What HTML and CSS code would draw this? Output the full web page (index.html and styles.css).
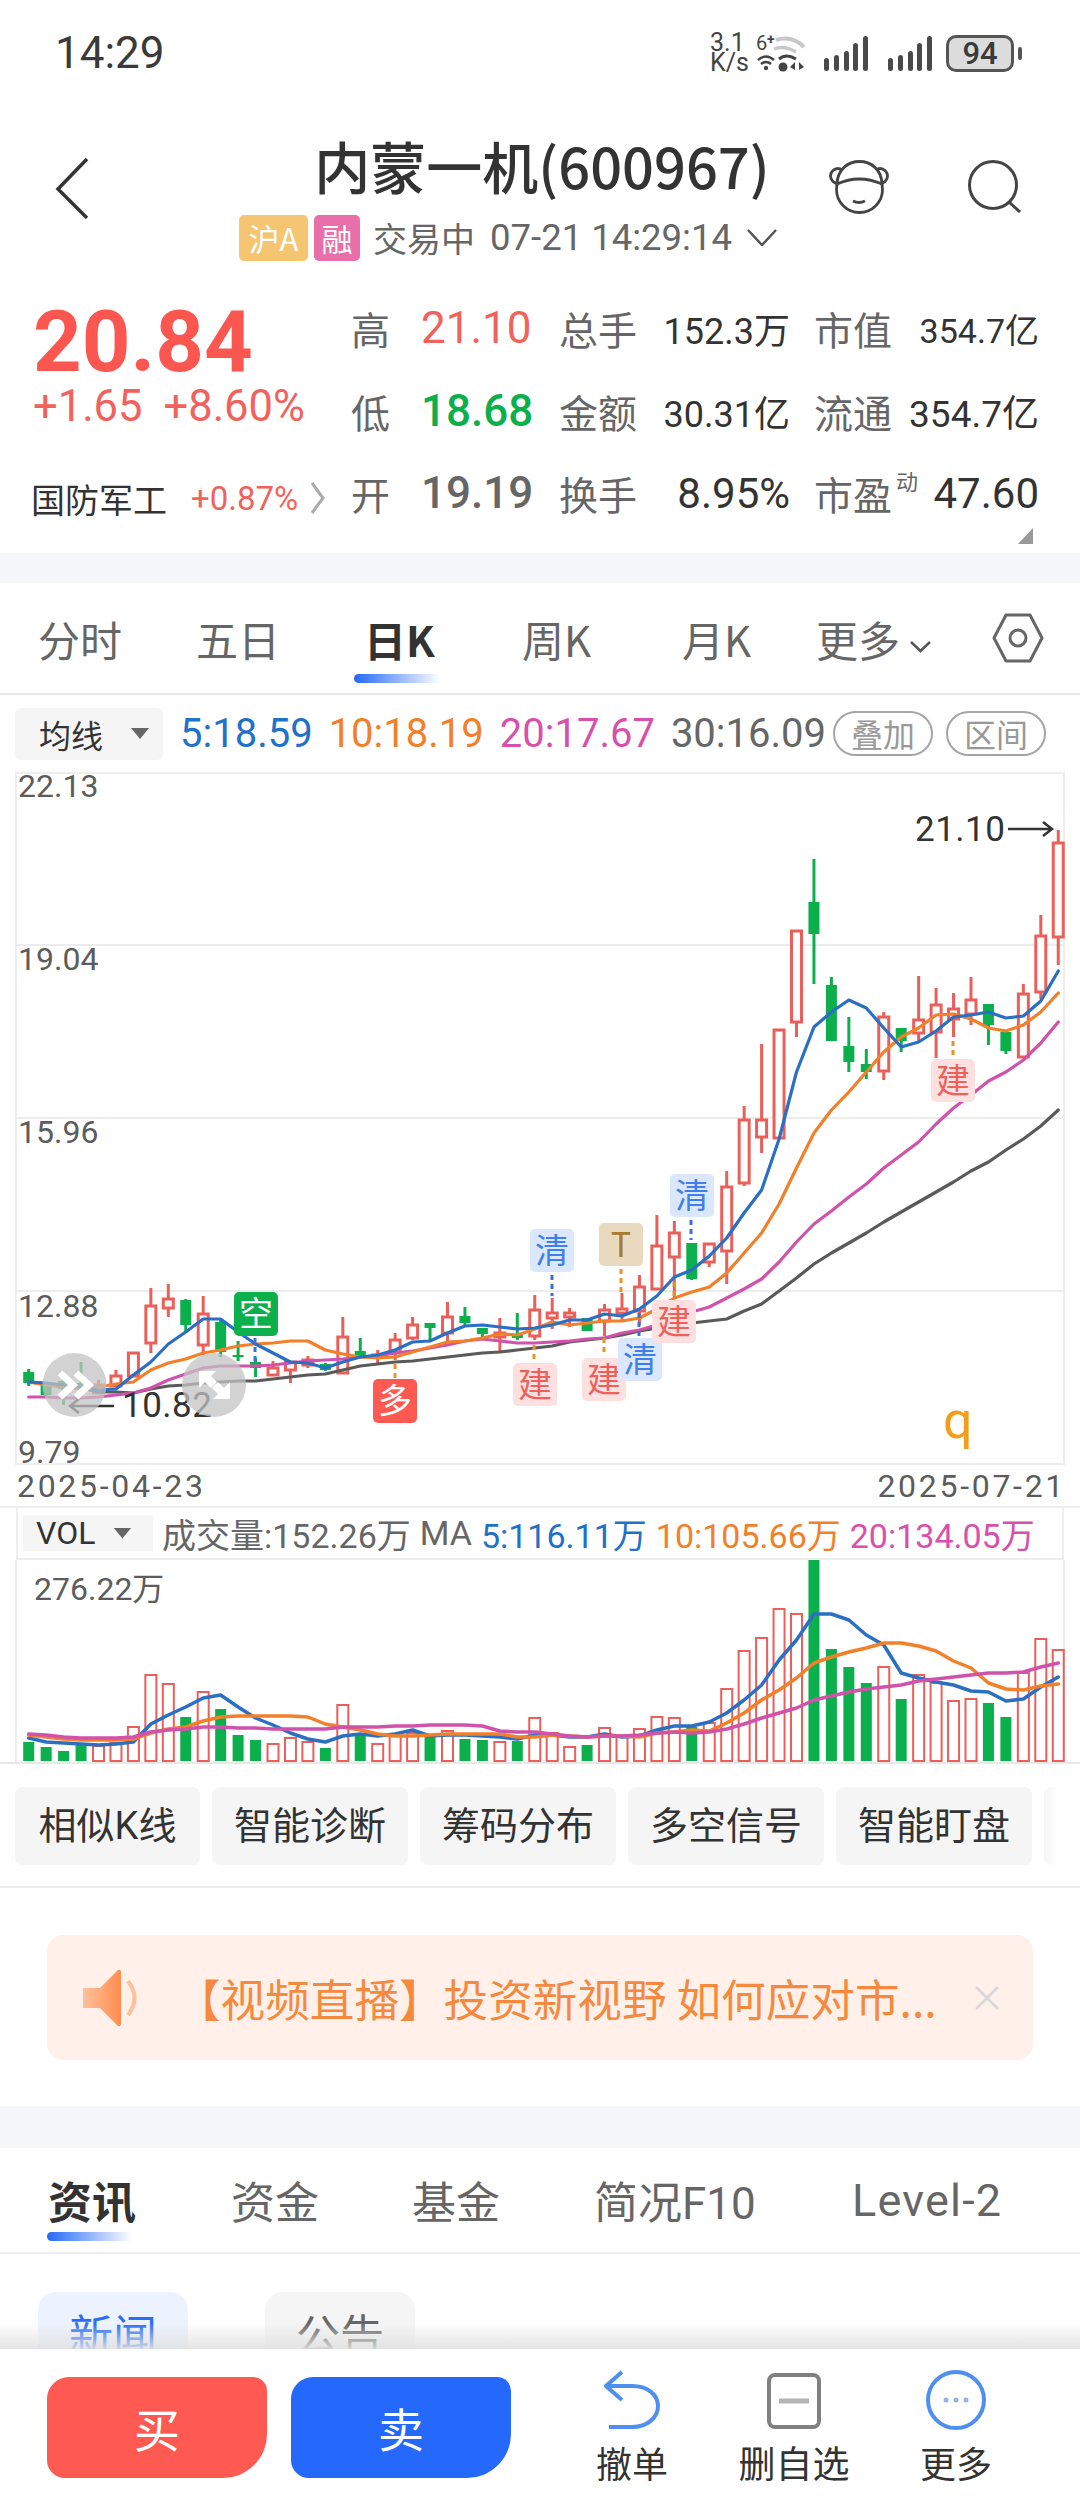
FILE: index.html
```html
<!DOCTYPE html>
<html lang="zh-CN">
<head>
    <meta charset="UTF-8">
    <meta name="viewport" content="width=device-width, initial-scale=1.0">
    <title>内蒙一机(600967)</title>
    <link rel="stylesheet" href="styles.css">
</head>
<body>
    <div class="status">
        <span class="status-time">14:29</span>
        <div class="status-icons">
            <div class="net-speed"><span>3.1</span><span>K/s</span></div>
            <svg class="wifi" width="50" height="37" viewBox="0 0 50 37">
                <text x="0" y="15" class="wifi-six">6</text>
                <text x="11" y="9" class="wifi-plus">+</text>
                <path d="M20 5Q36 0 48 12" fill="none" stroke="#c8c8c8" stroke-width="4"/>
                <path d="M18 14Q28 10 40 17" fill="none" stroke="#c8c8c8" stroke-width="3.5"/>
                <path d="M2 25Q10 18 18 25M5 29Q10 25 15 29" fill="none" stroke="#444" stroke-width="2.5"/>
                <circle cx="10" cy="33" r="2.2" fill="#444"/>
                <path d="M23 24Q30 18 40 24" fill="none" stroke="#444" stroke-width="3"/>
                <circle cx="27" cy="32" r="4.5" fill="#444"/>
                <path d="M34 32l5-5v8zM43 27l5 5-5 3z" fill="#444"/>
            </svg>
            <div class="signal"><i></i><i></i><i></i><i></i><i></i></div>
            <div class="signal signal-second"><i></i><i></i><i></i><i></i><i></i></div>
            <div class="battery">94</div>
            <div class="battery-tip"></div>
        </div>
    </div>

    <div class="header">
        <svg class="back-icon" width="36" height="64" viewBox="0 0 36 64">
            <path d="M33 3L4 33l29 29" fill="none" stroke="#333" stroke-width="3.5"/>
        </svg>
        <div class="header-title">
            <h1 class="stock-name">内蒙一机(600967)</h1>
            <div class="stock-sub">
                <span class="tag tag-market">沪A</span>
                <span class="tag tag-margin">融</span>
                <span class="trade-state">交易中</span>
                <span class="trade-time">07-21 14:29:14</span>
                <svg width="30" height="17" viewBox="0 0 30 17"><path d="M1 1l14 15L29 1" fill="none" stroke="#555" stroke-width="2.5"/></svg>
            </div>
        </div>
        <svg class="robot-icon" width="60" height="56" viewBox="0 0 60 56">
            <circle cx="9" cy="17" r="7.5" fill="none" stroke="#444" stroke-width="2.8"/>
            <circle cx="51" cy="17" r="7.5" fill="none" stroke="#444" stroke-width="2.8"/>
            <circle cx="30.500" cy="30.500" r="23" fill="#fff" stroke="#444" stroke-width="2.8"/>
            <path d="M8 25C9-5 52-5 53 25Q30 15 8 25Z" fill="#fff" stroke="#444" stroke-width="2.8" stroke-linejoin="round"/>
            <path d="M24 42Q30 45 36 42" fill="none" stroke="#444" stroke-width="2.8"/>
        </svg>
        <svg class="search-icon" width="56" height="54" viewBox="0 0 56 54">
            <circle cx="26" cy="25" r="23.5" fill="none" stroke="#444" stroke-width="3"/>
            <path d="M42 42l11 10" fill="none" stroke="#444" stroke-width="3"/>
        </svg>
    </div>

    <div class="quote">
        <div class="quote-left">
            <div class="price">20.84</div>
            <div class="price-change"><span>+1.65</span><span>+8.60%</span></div>
            <div class="sector">
                <span class="sector-name">国防军工</span>
                <span class="sector-change">+0.87%</span>
                <svg width="14" height="32" viewBox="0 0 14 32"><path d="M1 1l11 15L1 31" fill="none" stroke="#aaa" stroke-width="3"/></svg>
            </div>
        </div>
        <div class="quote-table">
            <span class="q-label">高</span><span class="q-big red">21.10</span>
            <span class="q-label">总手</span><span class="q-val q-mid">152.3万</span>
            <span class="q-label">市值</span><span class="q-end q-small">354.7亿</span>

            <span class="q-label">低</span><span class="q-big green">18.68</span>
            <span class="q-label">金额</span><span class="q-val q-mid">30.31亿</span>
            <span class="q-label">流通</span><span class="q-end q-mid2">354.7亿</span>

            <span class="q-label">开</span><span class="q-big gray">19.19</span>
            <span class="q-label">换手</span><span class="q-val q-large">8.95%</span>
            <span class="q-label">市盈<sup class="q-sup">动</sup></span><span class="q-end q-large">47.60</span>
        </div>
        <div class="corner-mark"></div>
    </div>

    <div class="band band-top"></div>

    <div class="period-tabs">
        <span class="tab">分时</span>
        <span class="tab">五日</span>
        <span class="tab tab-active">日K</span>
        <span class="tab">周K</span>
        <span class="tab">月K</span>
        <span class="tab tab-more">更多<svg width="21" height="12" viewBox="0 0 21 12"><path d="M1 1l9.500 9L20 1" fill="none" stroke="#555" stroke-width="2.5"/></svg></span>
        <svg width="52" height="50" viewBox="0 0 52 50">
            <path d="M14 2H38L50 25 38 48H14L2 25Z" fill="none" stroke="#666" stroke-width="3" stroke-linejoin="round"/>
            <circle cx="26" cy="25" r="8" fill="none" stroke="#666" stroke-width="3"/>
        </svg>
    </div>

    <div class="ma-row">
        <div class="picker picker-ma">均线<i class="picker-arrow"></i></div>
        <span class="ma5">5:18.59</span>
        <span class="ma10">10:18.19</span>
        <span class="ma20">20:17.67</span>
        <span class="ma30">30:16.09</span>
        <span class="pill pill-first">叠加</span>
        <span class="pill">区间</span>
    </div>

    <svg class="kline" width="1080" height="693" viewBox="0 772 1080 693">
        <rect class="frame" x="16" y="773" width="1048" height="691"/>
        <path class="grid" d="M16 945H1064M16 1118H1064M16 1291H1064"/>
        <text class="axis" x="18" y="797">22.13</text>
        <text class="axis" x="18" y="970">19.04</text>
        <text class="axis" x="18" y="1143">15.96</text>
        <text class="axis" x="18" y="1317">12.88</text>
        <text class="axis" x="18" y="1463">9.79</text>
        <g id="candles"></g>
        <g id="kLines"></g>
        <g id="signals"></g>
        <text class="mark" x="915" y="841">21.10</text>
        <path class="mark-arrow" d="M1008 829H1052M1043 822l9 7-9 7"/>
        <text class="mark" x="122" y="1417">10.82</text>
        <path class="mark-arrow" d="M114 1406H70M79 1399l-9 7 9 7"/>
        <text class="letter-q" x="943" y="1438">q</text>
        <circle class="float-btn" cx="74.500" cy="1385" r="32"/>
        <path class="float-icon" d="M60 1373l13 12-13 12M76 1373l13 12-13 12"/>
        <circle class="float-btn" cx="214" cy="1385" r="32"/>
        <path class="float-arrow" d="M199 1371h17l-5 5 6 6-6 6-6-6-6 6zM230 1399h-17l5-5-6-6 6-6 6 6 6-6z"/>
    </svg>

    <div class="date-row"><span>2025-04-23</span><span>2025-07-21</span></div>

    <div class="vol-row">
        <div class="picker picker-vol">VOL<i class="picker-arrow"></i></div>
        <span class="vol-text">成交量:152.26万</span>
        <span class="vol-text">MA</span>
        <span class="ma5">5:116.11万</span>
        <span class="ma10">10:105.66万</span>
        <span class="ma20">20:134.05万</span>
    </div>

    <svg class="volume" width="1080" height="202" viewBox="0 1560 1080 202">
        <path class="frame-side" d="M16 1560V1762M1064 1560V1762"/>
        <text class="axis" x="34" y="1600">276.22万</text>
        <g id="volBars"></g>
        <g id="volLines"></g>
    </svg>

    <div class="shortcuts">
        <span class="shortcut shortcut-first">相似K线</span>
        <span class="shortcut">智能诊断</span>
        <span class="shortcut">筹码分布</span>
        <span class="shortcut">多空信号</span>
        <span class="shortcut">智能盯盘</span>
        <span class="shortcut shortcut-cut"></span>
    </div>

    <div class="banner-wrap">
        <div class="banner">
            <svg class="speaker" width="58" height="58" viewBox="0 0 58 58">
                <defs>
                    <linearGradient id="speakerFill" x1="0" x2="1" y1="0" y2="0">
                        <stop offset="0" stop-color="#ffc09c"/>
                        <stop offset="1" stop-color="#ff8d4f"/>
                    </linearGradient>
                </defs>
                <path d="M0 19H17L35 1Q38 0 38 4V54Q38 58 35 57L17 39H0Z" fill="url(#speakerFill)"/>
                <path d="M45 12Q58 29 45 46" fill="none" stroke="#ffc09c" stroke-width="4"/>
            </svg>
            <span class="banner-text">【视频直播】投资新视野 如何应对市...</span>
            <svg width="24" height="24" viewBox="0 0 24 24"><path d="M1 1L23 23M23 1L1 23" stroke="#d8d8d8" stroke-width="2.5"/></svg>
        </div>
    </div>

    <div class="band band-mid"></div>

    <div class="info-tabs">
        <span class="info-tab info-active">资讯</span>
        <span class="info-tab">资金</span>
        <span class="info-tab">基金</span>
        <span class="info-tab">简况F10</span>
        <span class="info-tab info-level">Level-2</span>
    </div>

    <div class="news-types">
        <span class="news-type news-active">新闻</span>
        <span class="news-type">公告</span>
    </div>

    <div class="bottom-bar">
        <div class="trade-btn buy">买</div>
        <div class="trade-btn sell">卖</div>
        <div class="action action-first">
            <svg width="56" height="60" viewBox="0 0 56 60">
                <path d="M18 2L2 16l16 14M2 16H28C44 16 54 25 54 36S44 57 28 57H5" fill="none" stroke="#4f8ff0" stroke-width="4"/>
            </svg>
            <span>撤单</span>
        </div>
        <div class="action">
            <svg width="56" height="60" viewBox="0 0 56 60">
                <rect x="3" y="5" width="50" height="52" rx="6" fill="none" stroke="#808080" stroke-width="4"/>
                <path d="M13 31H43" stroke="#b5b5b5" stroke-width="5"/>
            </svg>
            <span class="action-wide">删自选</span>
        </div>
        <div class="action">
            <svg width="60" height="60" viewBox="0 0 60 60">
                <circle cx="30" cy="30" r="28" fill="none" stroke="#4f8ff0" stroke-width="4"/>
                <circle cx="20" cy="30" r="2.500" fill="#8fb5ea"/>
                <circle cx="30" cy="30" r="2.500" fill="#8fb5ea"/>
                <circle cx="40" cy="30" r="2.500" fill="#8fb5ea"/>
            </svg>
            <span>更多</span>
        </div>
    </div>

    <script src="chart.js"></script>
</body>
</html>
```
FILE: styles.css
```css
* { box-sizing: border-box; }
body {
    margin: 0;
    width: 1080px;
    height: 2504px;
    overflow: hidden;
    background: #fff;
    color: #333;
    font-family: Roboto, "Noto Sans CJK SC", sans-serif;
}

/* status bar */
.status {
    height: 106px;
    padding: 0 58px 0 55px;
    display: flex;
    align-items: center;
    justify-content: space-between;
}
.status-time { font-size: 44px; color: #3a3a3a; }
.status-icons { display: flex; align-items: center; }
.net-speed {
    display: flex;
    flex-direction: column;
    font-size: 25px;
    line-height: 20px;
    color: #444;
    width: 46px;
}
.wifi { margin-right: 18px; overflow: visible; }
.wifi-six { font-size: 20px; fill: #444; }
.wifi-plus { font-size: 14px; fill: #444; font-weight: 700; }
.signal {
    display: flex;
    align-items: flex-end;
    justify-content: space-between;
    width: 44px;
    height: 35px;
    margin-right: 20px;
}
.signal-second { margin-right: 14px; }
.signal i { width: 5px; background: #4a4a4a; border-radius: 2.5px; }
.signal i:nth-child(1) { height: 13px; }
.signal i:nth-child(2) { height: 16px; }
.signal i:nth-child(3) { height: 20px; }
.signal i:nth-child(4) { height: 28px; }
.signal i:nth-child(5) { height: 35px; }
.battery {
    width: 68px;
    height: 37px;
    border: 3px solid #555;
    border-radius: 10px;
    background: #dcdcdc;
    font-size: 31px;
    line-height: 31px;
    font-weight: 500;
    text-align: center;
    color: #3a3a3a;
}
.battery-tip {
    width: 4px;
    height: 13px;
    margin-left: 4px;
    background: #555;
    border-radius: 2px;
}

/* title */
.header {
    height: 181px;
    display: flex;
    align-items: flex-start;
}
.back-icon { margin: 50px 0 0 54px; }
.header-title {
    width: 740px;
    display: flex;
    flex-direction: column;
    align-items: center;
}
.stock-name {
    margin: 25px 0 0 164px;
    font-family: "Noto Sans CJK SC", sans-serif;
    font-size: 56px;
    line-height: 68px;
    font-weight: 500;
    color: #333;
    white-space: nowrap;
}
.stock-sub {
    margin: 14px 0 0 96px;
    display: flex;
    align-items: center;
    color: #666;
    font-size: 34px;
    white-space: nowrap;
}
.tag {
    height: 46px;
    border-radius: 5px;
    color: #fff;
    font-size: 31px;
    line-height: 46px;
    text-align: center;
    font-family: "Noto Sans CJK SC", sans-serif;
}
.tag-market { width: 69px; background: #f5c572; margin-right: 6px; }
.tag-margin { width: 46px; background: #e86fa9; margin-right: 13px; }
.trade-state { margin-right: 15px; font-family: "Noto Sans CJK SC", sans-serif; font-size: 34px; }
.trade-time { margin-right: 15px; font-size: 36.5px; }
.robot-icon { margin: 53px 0 0 -1px; }
.search-icon { margin: 54px 0 0 78px; }

/* price block */
.quote { position: relative; height: 266px; display: flex; }
.quote-left { width: 351px; padding: 14px 0 0 33px; }
.price {
    font-size: 85px;
    line-height: 82px;
    font-weight: 700;
    color: #fb5750;
}
.price-change {
    display: flex;
    gap: 21px;
    font-size: 43.5px;
    line-height: 48px;
    color: #f2625c;
}
.sector {
    margin-top: 43px;
    height: 48px;
    display: flex;
    align-items: center;
    margin-left: -2px;
}
.sector-name {
    width: 160px;
    font-family: "Noto Sans CJK SC", sans-serif;
    font-size: 34px;
    color: #333;
}
.sector-change { width: 120px; font-size: 33px; color: #f2625c; }
.quote-table {
    display: grid;
    grid-template-columns: 70px 138px 78px 177px 78px 147px;
    grid-auto-rows: 82.5px;
    align-items: center;
    height: 247px;
}
.q-label {
    font-family: "Noto Sans CJK SC", sans-serif;
    font-size: 39px;
    color: #666;
    white-space: nowrap;
    position: relative;
}
.q-sup {
    position: absolute;
    left: 82px;
    top: 0;
    font-size: 22px;
    line-height: 30px;
}
.q-big { font-size: 44px; }
.red { color: #f2625c; }
.green { color: #0bb04d; font-weight: 500; }
.gray { color: #666; font-weight: 500; }
.q-val { text-align: right; padding-right: 24px; color: #333; white-space: nowrap; }
.q-end { text-align: right; color: #333; white-space: nowrap; }
.q-small { font-size: 34px; }
.q-mid { font-size: 36px; }
.q-mid2 { font-size: 37px; }
.q-large { font-size: 42px; }
.corner-mark {
    position: absolute;
    left: 1018px;
    top: 241px;
    width: 15px;
    height: 16px;
    background: #999;
    clip-path: polygon(100% 0, 100% 100%, 0 100%);
}

.band { background: #f5f7f9; }
.band-top { height: 30px; }
.band-mid { height: 42px; }

/* period tabs */
.period-tabs {
    height: 112px;
    padding-left: 38px;
    display: grid;
    grid-template-columns: 158px 168px 158px 160px 134px 176px 52px;
    align-items: center;
    border-bottom: 2px solid #e8e8e8;
}
.tab {
    position: relative;
    font-size: 42px;
    color: #666;
    white-space: nowrap;
    font-family: "Noto Sans CJK SC", sans-serif;
    font-weight: 400;
}
.tab-more svg { margin-left: 10px; vertical-align: 4px; }
.tab-active { font-weight: 700; color: #333; }
.tab-active::after {
    content: "";
    position: absolute;
    left: -10px;
    top: 66px;
    width: 87px;
    height: 9px;
    border-radius: 5px 0 0 5px;
    background: linear-gradient(90deg, #2469fb, rgba(36, 105, 251, 0));
}

/* moving average row */
.ma-row {
    height: 77px;
    padding-left: 15px;
    display: flex;
    align-items: center;
    font-size: 40px;
    gap: 16px;
    white-space: nowrap;
}
.picker {
    display: flex;
    align-items: center;
    background: #f5f5f5;
    color: #333;
}
.picker-ma {
    width: 148px;
    height: 52px;
    padding-left: 24px;
    border-radius: 6px;
    font-family: "Noto Sans CJK SC", sans-serif;
    font-size: 32px;
    margin-right: 1px;
}
.picker-arrow {
    width: 18px;
    height: 11px;
    margin-left: 28px;
    background: #666;
    clip-path: polygon(0 0, 100% 0, 50% 100%);
}
.ma5 { color: #1f71c9; }
.ma10 { color: #f27f2a; }
.ma20 { color: #d850ab; }
.ma30 { color: #666; }
.pill {
    width: 100px;
    height: 45px;
    border: 2px solid #a5a5a5;
    border-radius: 23px;
    color: #999;
    font-family: "Noto Sans CJK SC", sans-serif;
    font-size: 32px;
    line-height: 40px;
    text-align: center;
    margin-left: -3px;
}
.pill-first { margin-left: -9px; }

/* charts */
.kline, .volume { display: block; overflow: visible; }
.frame { fill: none; stroke: #eeeeee; stroke-width: 2; }
.frame-side { stroke: #eeeeee; stroke-width: 2; }
.grid { stroke: #e6e6e6; stroke-width: 1.5; fill: none; }
.axis { font-size: 32px; fill: #5c5c5c; }
.mark { font-size: 35px; fill: #333; letter-spacing: 0.5px; }
.mark-arrow { fill: none; stroke: #333; stroke-width: 2.5; }
.letter-q { font-size: 52px; fill: #f49d1a; }
.float-btn { fill: rgba(195, 195, 195, 0.75); }
.float-icon { fill: none; stroke: #fff; stroke-width: 7; }
.float-arrow { fill: #fff; }

.candle-wick { stroke-width: 3; fill: none; }
.up { stroke: #ea5f5a; }
.up-body { stroke: #ea5f5a; stroke-width: 3; fill: #fff; }
.down { stroke: #0bb04d; }
.down-body { fill: #0bb04d; stroke: none; }
.vol-up { fill: none; stroke: #ea5f5a; stroke-width: 2; }
.line { fill: none; stroke-linejoin: round; stroke-linecap: round; stroke-width: 3.2; }
.line-ma5 { stroke: #2a6fc4; }
.line-ma10 { stroke: #f27f2a; }
.line-ma20 { stroke: #d152ab; }
.line-ma30 { stroke: #5a5a5a; }
.volume .line { stroke-width: 3.5; }

.signal-dots { stroke-width: 3; stroke-dasharray: 5 4; fill: none; }
.signal-tag-text {
    font-family: "Noto Sans CJK SC", sans-serif;
    font-size: 34px;
    text-anchor: middle;
}

.date-row {
    height: 43px;
    padding: 0 14px 0 17px;
    display: flex;
    justify-content: space-between;
    align-items: center;
    font-size: 32px;
    letter-spacing: 2.7px;
    color: #5c5c5c;
    border-bottom: 2px solid #eeeeee;
}

.vol-row {
    height: 52px;
    margin: 0 16px;
    padding-left: 5px;
    display: flex;
    align-items: center;
    gap: 9px;
    font-size: 34px;
    white-space: nowrap;
    border: solid #eeeeee;
    border-width: 0 2px 2px;
}
.picker-vol { width: 130px; height: 36px; padding-left: 13px; font-size: 32px; }
.picker-vol .picker-arrow { margin-left: 18px; }
.vol-text { color: #666; }

/* shortcut buttons */
.shortcuts {
    height: 126px;
    padding: 23px 0 0 15px;
    display: flex;
    gap: 12px;
    overflow: hidden;
    border-top: 2px solid #e8e8e8;
    border-bottom: 2px solid #eeeeee;
}
.shortcut {
    flex: none;
    width: 196px;
    height: 78px;
    background: #f5f5f5;
    border-radius: 8px;
    font-size: 38px;
    line-height: 78px;
    text-align: center;
    color: #333;
}
.shortcut-first { width: 185px; }
.shortcut-cut { background: linear-gradient(90deg, #f5f5f5, #fff 14px); }

/* banner */
.banner-wrap { height: 218px; padding: 47px 47px 0; }
.banner {
    height: 125px;
    padding: 0 34px 0 36px;
    display: flex;
    align-items: center;
    background: #fff1ea;
    border-radius: 16px;
}
.speaker { margin-right: 35px; }
.banner-text {
    flex: 1;
    font-family: "Noto Sans CJK SC", sans-serif;
    font-size: 44.6px;
    color: #f58a3f;
    white-space: nowrap;
}

/* info tabs */
.info-tabs {
    height: 106px;
    padding-left: 48px;
    display: grid;
    grid-template-columns: 183px 181px 182px 258px auto;
    align-items: center;
    border-bottom: 2px solid #eeeeee;
}
.info-tab {
    position: relative;
    font-size: 44px;
    color: #666;
    white-space: nowrap;
}
.info-level { font-size: 45px; letter-spacing: 1.2px; }
.info-active { font-weight: 700; color: #333; }
.info-active::after {
    content: "";
    position: absolute;
    left: -1px;
    top: 64px;
    width: 85px;
    height: 9px;
    border-radius: 5px 0 0 5px;
    background: linear-gradient(90deg, #2469fb, rgba(36, 105, 251, 0));
}

.news-types {
    height: 95px;
    padding: 38px 0 0 38px;
    display: flex;
    gap: 77px;
    overflow: hidden;
}
.news-type {
    width: 150px;
    height: 90px;
    border-radius: 18px;
    background: #f5f5f5;
    color: #666;
    font-size: 44px;
    line-height: 82px;
    text-align: center;
    font-family: "Noto Sans CJK SC", sans-serif;
}
.news-active { background: #edf3fe; color: #2a6ef5; }

/* bottom bar */
.bottom-bar {
    position: relative;
    height: 155px;
    padding-left: 47px;
    display: flex;
    background: #fff;
}
.bottom-bar::before {
    content: "";
    position: absolute;
    left: 0;
    right: 0;
    top: -26px;
    height: 26px;
    background: linear-gradient(rgba(225, 225, 225, 0), rgba(225, 225, 225, 0.9));
}
.trade-btn {
    width: 220px;
    height: 101px;
    margin-top: 28px;
    border-radius: 22px 14px 44px 18px;
    color: #fff;
    font-family: "Noto Sans CJK SC", sans-serif;
    font-size: 46px;
    line-height: 101px;
    text-align: center;
}
.buy { background: #ff5a52; margin-right: 24px; }
.sell { background: #2469fb; }
.action {
    width: 162px;
    padding-top: 21px;
    display: flex;
    flex-direction: column;
    align-items: center;
    font-size: 36px;
    color: #333;
}
.action span { margin-top: 11px; line-height: 50px; }
.action .action-wide { font-size: 37px; }
.action-first { margin-left: 40px; }
```
FILE: chart.js
```js
// page y of each 60-bar series, read off the chart
var STEP = 17.45;
var FIRST_X = 28.7;

function barX(i) { return FIRST_X + STEP * i; }

// [body top, body bottom, high, low, up]
var candles = [
    [1372,1383,1369,1386,0],[1385,1395,1385,1398,0],[1381,1389,1378,1405,0],[1383,1388,1362,1390,0],
    [1385,1393,1380,1393,1],[1376,1386,1370,1387,1],[1353,1376,1353,1376,1],[1306,1343,1288,1353,1],
    [1299,1308,1284,1317,1],[1300,1325,1299,1332,0],[1314,1345,1296,1355,1],[1322,1352,1320,1357,0],
    [1355,1357,1341,1361,0],[1362,1368,1358,1377,0],[1368,1375,1361,1375,1],[1362,1370,1362,1383,1],
    [1360,1365,1356,1368,1],[1364,1370,1363,1371,0],[1337,1373,1317,1374,1],[1351,1357,1338,1357,0],
    [1355,1357,1350,1365,1],[1340,1352,1333,1360,1],[1325,1338,1317,1340,1],[1323,1328,1323,1340,0],
    [1317,1333,1302,1343,1],[1316,1323,1307,1325,0],[1328,1334,1328,1337,0],[1333,1337,1318,1352,1],
    [1335,1338,1313,1340,0],[1310,1336,1295,1340,1],[1313,1318,1298,1329,1],[1313,1317,1308,1327,1],
    [1318,1331,1318,1331,0],[1310,1321,1304,1336,1],[1309,1313,1293,1320,1],[1287,1311,1275,1325,1],
    [1246,1289,1215,1289,1],[1233,1257,1221,1298,1],[1243,1279,1243,1280,0],[1244,1262,1244,1267,1],
    [1187,1251,1171,1284,1],[1120,1183,1106,1186,1],[1120,1137,1044,1153,1],[1030,1138,1030,1138,1],
    [931,1022,931,1037,1],[902,934,859,984,0],[985,1041,977,1041,0],[1046,1062,1017,1072,0],
    [1064,1072,1049,1079,0],[1017,1071,1012,1080,1],[1028,1041,1028,1052,0],[1020,1033,976,1043,1],
    [1005,1032,988,1058,1],[1009,1019,993,1037,1],[1000,1014,977,1025,1],[1004,1025,1004,1045,0],
    [1032,1051,1032,1054,0],[994,1057,984,1057,1],[936,992,915,999,1],[843,937,830,965,1]
];

var kMa = {
    ma30: [1382,1384,1387,1388,1392,1392,1393,1389,1386,1385,1383,1382,1381,1381,1379,1377,1375,1374,1370,1366,1364,1362,1361,1359,1357,1355,1353,1352,1350,1348,1346,1342,1340,1338,1335,1331,1328,1325,1323,1321,1319,1311,1304,1291,1278,1264,1253,1243,1233,1222,1212,1202,1192,1182,1171,1162,1150,1139,1126,1110],
    ma20: [1397,1397,1398,1398,1397,1395,1393,1388,1380,1374,1368,1366,1366,1366,1365,1363,1361,1360,1359,1357,1356,1353,1351,1348,1345,1341,1339,1341,1343,1343,1342,1341,1339,1338,1333,1330,1325,1319,1312,1307,1298,1289,1279,1262,1242,1224,1211,1197,1184,1168,1155,1142,1124,1108,1095,1081,1072,1060,1043,1022],
    ma10: [1382,1385,1387,1389,1387,1384,1382,1370,1363,1359,1353,1350,1346,1344,1343,1341,1341,1350,1354,1357,1358,1357,1352,1347,1342,1341,1338,1334,1335,1329,1322,1325,1323,1321,1321,1318,1309,1298,1292,1287,1273,1253,1233,1204,1168,1133,1110,1092,1072,1052,1037,1028,1015,1014,1019,1028,1031,1025,1012,993],
    ma5: [1382,1383,1385,1387,1390,1389,1375,1362,1344,1332,1319,1319,1332,1344,1353,1362,1363,1368,1362,1357,1355,1350,1342,1341,1333,1326,1325,1327,1329,1328,1325,1320,1320,1314,1316,1309,1296,1277,1270,1256,1238,1213,1190,1139,1072,1027,1012,1000,1008,1028,1047,1042,1031,1017,1015,1012,1018,1016,1001,971]
};

var volHeights = [19,14,10,16,15,18,34,86,77,44,69,52,26,21,17,23,19,13,56,26,17,25,28,24,30,22,21,19,20,43,28,14,16,33,24,32,44,43,34,38,72,110,123,152,147,201,112,94,78,94,62,86,78,60,62,58,44,88,122,111];
var volDown = [0,1,2,3,9,11,12,13,17,19,23,25,26,28,32,38,45,46,47,48,50,55,56];

var volMa = {
    ma5: [1738,1742,1743,1744,1745,1744,1742,1724,1715,1707,1698,1695,1707,1718,1725,1733,1739,1742,1736,1734,1736,1734,1730,1736,1735,1735,1736,1737,1739,1735,1735,1737,1737,1734,1737,1736,1730,1726,1726,1722,1713,1700,1685,1660,1640,1614,1614,1620,1635,1645,1673,1678,1682,1685,1691,1692,1701,1699,1687,1677],
    ma10: [1735,1737,1739,1740,1740,1740,1739,1733,1729,1727,1721,1717,1716,1716,1716,1716,1717,1724,1727,1730,1734,1736,1736,1735,1734,1734,1734,1734,1737,1737,1735,1736,1737,1736,1736,1737,1733,1732,1730,1731,1723,1713,1700,1690,1678,1663,1657,1652,1648,1643,1643,1646,1651,1661,1668,1683,1689,1690,1686,1684],
    ma20: [1734,1735,1737,1738,1738,1738,1737,1732,1730,1729,1727,1727,1728,1728,1729,1729,1729,1729,1727,1727,1727,1726,1726,1725,1725,1725,1726,1731,1732,1732,1734,1736,1737,1736,1736,1735,1733,1732,1733,1732,1729,1724,1718,1713,1708,1700,1696,1692,1689,1687,1685,1681,1679,1677,1675,1673,1673,1672,1667,1663]
};

// [left, top, text, background, colour, dot x, dot y1, dot y2, dot colour]
var signals = [
    [234,1292,"空","#0bb04d","#fff",255,1338,1362,"#3f6fd0"],
    [373,1379,"多","#ff5a52","#fff",395,1364,1378,"#e6942a"],
    [513,1363,"建","#fde0df","#f0605a",534,1345,1361,"#e6942a"],
    [530,1229,"清","#dbe7fd","#3f7fe8",552,1275,1296,"#3f6fd0"],
    [599,1223,"T","#e8d9bf","#a87a2f",621,1269,1295,"#e6942a"],
    [582,1358,"建","#fde0df","#f0605a",604,1338,1356,"#e6942a"],
    [618,1338,"清","#dbe7fd","#3f7fe8",639,1313,1336,"#3f6fd0"],
    [652,1300,"建","#fde0df","#f0605a",674,1282,1299,"#e6942a"],
    [670,1174,"清","#dbe7fd","#3f7fe8",691,1220,1240,"#3f6fd0"],
    [931,1059,"建","#fde0df","#f0605a",953,1041,1057,"#e6942a"]
];

function points(ys) {
    return ys.map(function (y, i) { return barX(i).toFixed(1) + "," + y; }).join(" ");
}

function drawCandles() {
    var html = "";
    candles.forEach(function (c, i) {
        var x = barX(i);
        var up = c[4] === 1;
        html += '<path class="candle-wick ' + (up ? "up" : "down") + '" d="M' + x + " " + c[2] + "V" + c[0] + "M" + x + " " + c[1] + "V" + c[3] + '"/>';
        if (up) {
            html += '<rect class="up-body" x="' + (x - 5) + '" y="' + c[0] + '" width="10" height="' + (c[1] - c[0]) + '"/>';
        } else {
            html += '<rect class="down-body" x="' + (x - 5.5) + '" y="' + c[0] + '" width="11" height="' + (c[1] - c[0]) + '"/>';
        }
    });
    document.getElementById("candles").innerHTML = html;
}

function drawLines(id, series) {
    var html = "";
    Object.keys(series).forEach(function (name) {
        html += '<polyline class="line line-' + name + '" points="' + points(series[name]) + '"/>';
    });
    document.getElementById(id).innerHTML = html;
}

function drawVolume() {
    var html = "";
    var base = 1761;
    volHeights.forEach(function (h, i) {
        var x = barX(i);
        if (volDown.indexOf(i) >= 0) {
            html += '<rect class="down-body" x="' + (x - 5.5) + '" y="' + (base - h) + '" width="11" height="' + h + '"/>';
        } else {
            html += '<rect class="vol-up" x="' + (x - 5.5) + '" y="' + (base - h) + '" width="11" height="' + h + '"/>';
        }
    });
    document.getElementById("volBars").innerHTML = html;
}

function drawSignals() {
    var html = "";
    signals.forEach(function (s) {
        var h = s[2] === "空" || s[2] === "多" ? 44 : 43;
        html += '<path class="signal-dots" stroke="' + s[8] + '" d="M' + s[5] + " " + s[6] + "V" + s[7] + '"/>';
        html += '<rect x="' + s[0] + '" y="' + s[1] + '" width="44" height="' + h + '" rx="5" fill="' + s[3] + '"/>';
        html += '<text class="signal-tag-text" x="' + (s[0] + 22) + '" y="' + (s[1] + 34) + '" fill="' + s[4] + '">' + s[2] + "</text>";
    });
    document.getElementById("signals").innerHTML = html;
}

drawCandles();
drawLines("kLines", kMa);
drawVolume();
drawLines("volLines", volMa);
drawSignals();
```
